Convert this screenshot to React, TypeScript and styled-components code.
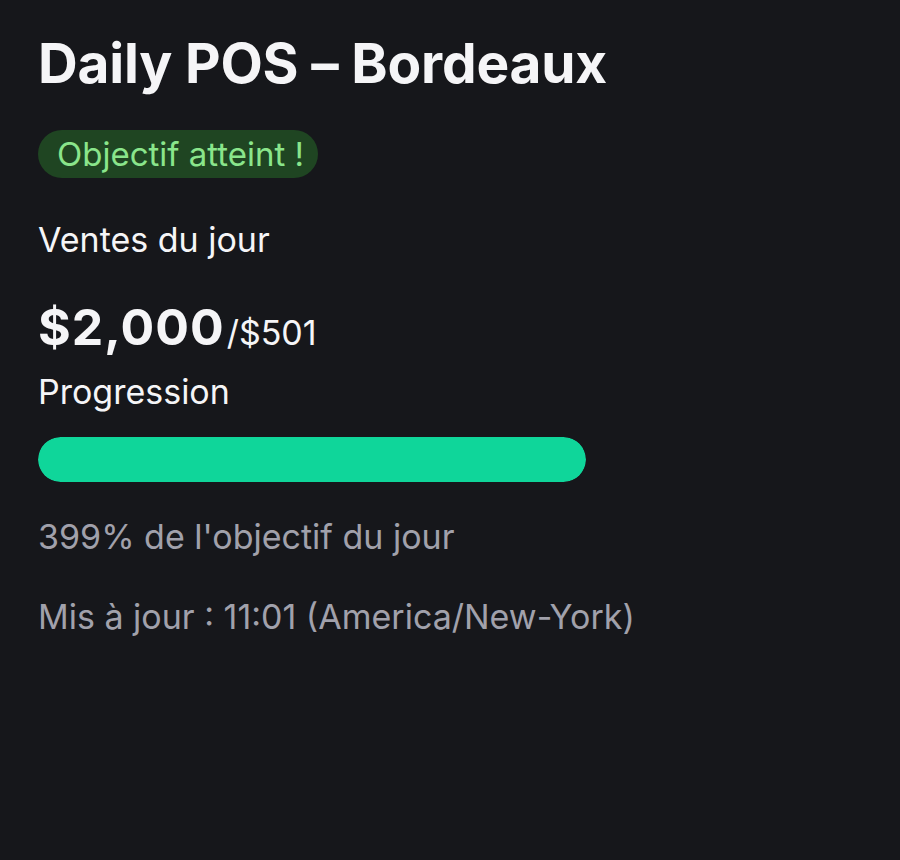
import styled, { createGlobalStyle } from "styled-components";

const GlobalStyle = createGlobalStyle`
    html, body {
        margin: 0;
        padding: 0;
        background: #16171b;
    }

    body {
        font-family: Inter, "Noto Sans", sans-serif;
        color: #f5f5f7;
    }
`;

const Page = styled.div`
    min-height: 860px;
    box-sizing: border-box;
    padding: 30px 38px;
    display: flex;
    flex-direction: column;
    align-items: flex-start;
`;

const Title = styled.h1`
    margin: 0;
    font-size: 55px;
    font-weight: 700;
    line-height: 66px;
    letter-spacing: -0.2px;
`;

const Badge = styled.span`
    margin-top: 34px;
    display: inline-flex;
    align-items: center;
    height: 48px;
    padding: 0 14px 0 19px;
    border-radius: 24px;
    background: #1f4522;
    color: #8ae58b;
    font-size: 33px;
    font-weight: 400;
`;

const Label = styled.div<{ $gap: number }>`
    margin-top: ${(p) => p.$gap}px;
    font-size: 34px;
    line-height: 42px;
    font-weight: 400;
`;

const Amount = styled.div`
    margin-top: 38px;
    display: flex;
    align-items: baseline;
`;

const Total = styled.span`
    font-size: 50px;
    font-weight: 700;
    line-height: 56px;
    letter-spacing: 1px;
`;

const Target = styled.span`
    margin-left: 2px;
    font-size: 34px;
    line-height: 40px;
    font-weight: 400;
`;

const Track = styled.div`
    margin-top: 24px;
    width: 548px;
    height: 45px;
    border-radius: 23px;
    background: #23242a;
    overflow: hidden;
`;

const Fill = styled.div`
    height: 100%;
    border-radius: 23px;
    background: #0fd69a;
`;

const Muted = styled.div<{ $gap: number }>`
    margin-top: ${(p) => p.$gap}px;
    font-size: 34px;
    line-height: 42px;
    color: #a1a1ab;
`;

export default function App() {
    const sales = 2000;
    const goal = 501;
    const percent = Math.round((sales / goal) * 100);

    return (
        <>
            <GlobalStyle />
            <Page>
                <Title>Daily POS – Bordeaux</Title>
                <Badge>Objectif atteint !</Badge>
                <Label $gap={41}>Ventes du jour</Label>
                <Amount>
                    <Total>$2,000</Total>
                    <Target>/$501</Target>
                </Amount>
                <Label $gap={16}>Progression</Label>
                <Track>
                    <Fill style={{ width: `${Math.min(percent, 100)}%` }} />
                </Track>
                <Muted $gap={34}>{percent}% de l'objectif du jour</Muted>
                <Muted $gap={38}>Mis à jour : 11:01 (America/New-York)</Muted>
            </Page>
        </>
    );
}
